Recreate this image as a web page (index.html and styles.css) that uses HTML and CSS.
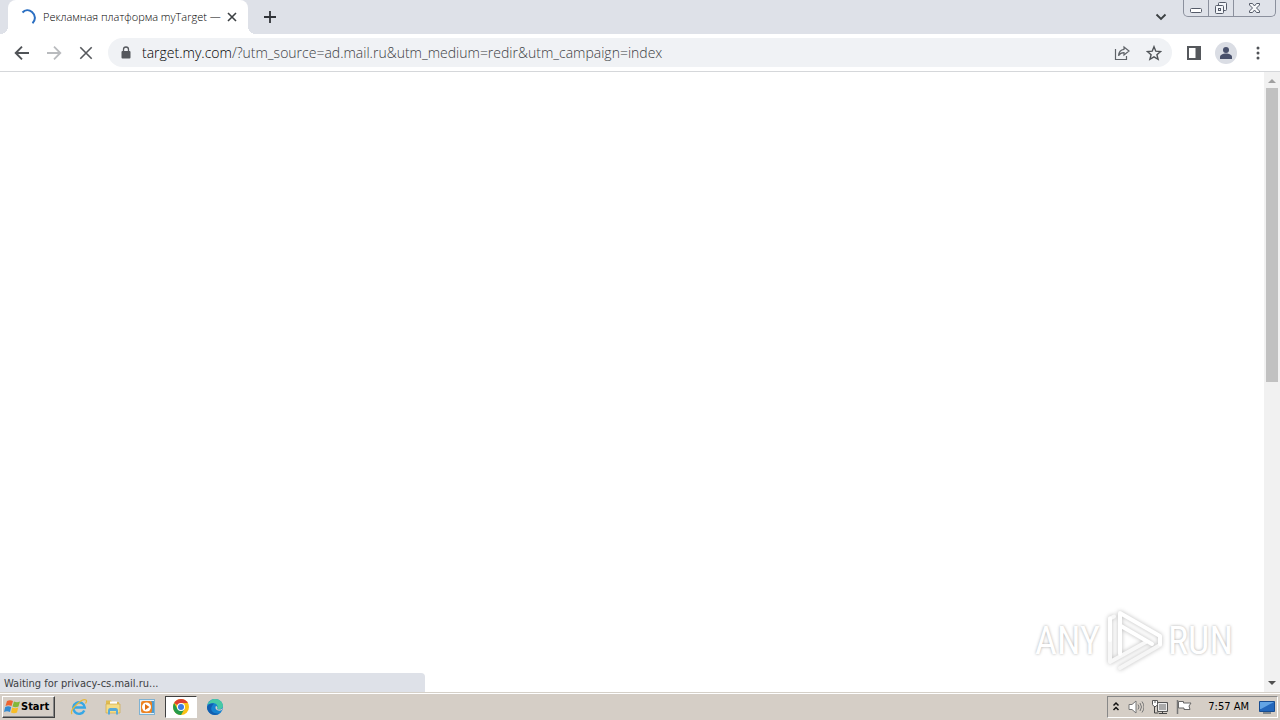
FILE: index.html
```html
<!DOCTYPE html>
<html lang="en">
<head>
<meta charset="utf-8">
<title>Рекламная платформа myTarget</title>
<link rel="stylesheet" href="styles.css">
</head>
<body>
<div class="screen">
  <header class="tabstrip">
    <div class="tab">
      <svg class="spinner" width="16" height="16" viewBox="0 0 16 16"><path d="M2.500 3.500C5 .8 9 .5 12 3c3.500 3 4 8 .5 11.200" fill="none" stroke="#2b6fc2" stroke-width="2"/></svg>
      <span class="tab-title">Рекламная платформа myTarget —</span>
      <button class="icon-btn tab-close" aria-label="Close tab"><svg width="10" height="10" viewBox="0 0 10 10"><path d="M1 1l8 8M9 1l-8 8" stroke="#3c4043" stroke-width="1.6"/></svg></button>
    </div>
    <button class="icon-btn new-tab" aria-label="New tab"><svg width="12" height="12" viewBox="0 0 12 12"><path d="M6 0v12M0 6h12" stroke="#303338" stroke-width="1.8"/></svg></button>
    <button class="icon-btn tab-search" aria-label="Search tabs"><svg width="12" height="8" viewBox="0 0 12 8"><path d="M1.5 1.5L6 6l4.500-4.500" fill="none" stroke="#3c4043" stroke-width="1.900"/></svg></button>
    <div class="window-controls">
      <button aria-label="Minimize"><svg width="13" height="16" viewBox="0 0 13 16"><rect x=".5" y="8.500" width="11" height="4" rx="1" fill="#fff" stroke="#555b69"/></svg></button>
      <button aria-label="Restore"><svg width="14" height="16" viewBox="0 0 14 16"><g fill="#f3f5f9" stroke="#555b69"><rect x="4.500" y="2.500" width="8" height="8" rx="1"/><rect x="1.500" y="5.500" width="8" height="8" rx="1"/><rect x="4.500" y="8.500" width="2" height="2"/></g></svg></button>
      <button class="wide" aria-label="Close"><svg width="13" height="16" viewBox="0 0 13 16"><path d="M1.500 3.500h3l2 2.500 2-2.500h3v1.500l-3 3 3 3v1.500h-3l-2-2.500-2 2.500h-3V11l3-3-3-3z" fill="#f8f9fb" stroke="#555b69"/></svg></button>
    </div>
  </header>

  <nav class="toolbar">
    <button class="icon-btn nav-btn" aria-label="Back"><svg width="16" height="16" viewBox="0 0 16 16"><path d="M15 8H2M8 1.700L1.700 8 8 14.300" fill="none" stroke="#505357" stroke-width="1.900"/></svg></button>
    <button class="icon-btn nav-btn" aria-label="Forward"><svg width="16" height="16" viewBox="0 0 16 16"><path d="M1 8h13M8 1.700L14.300 8 8 14.300" fill="none" stroke="#b9bbbe" stroke-width="1.800"/></svg></button>
    <button class="icon-btn nav-btn" aria-label="Stop loading"><svg width="16" height="16" viewBox="0 0 16 16"><path d="M2.300 2.300l11.400 11.400M13.700 2.300L2.300 13.700" stroke="#55585c" stroke-width="1.600"/></svg></button>
    <div class="omnibox">
      <svg width="12" height="14" viewBox="0 0 12 14"><rect x="1.500" y="5" width="9" height="7.500" rx="1" fill="#55585d"/><path d="M3.500 6V3.500a2.500 2.500 0 0 1 5 0V6" fill="none" stroke="#55585d" stroke-width="1.300"/></svg>
      <div class="url" role="textbox" aria-label="Address" tabindex="0"><span class="host">target.my.com</span>/?utm_source=ad.mail.ru&amp;utm_medium=redir&amp;utm_campaign=index</div>
      <button class="icon-btn" aria-label="Share"><svg width="16" height="16" viewBox="0 0 16 16"><path d="M1.500 4v10.500h11V11M10 2l5 4-5 4V7.700c-2.500 0-4.300 1-5.500 3 .3-3.600 2.200-6 5.500-6.400z" fill="none" stroke="#5f6368" stroke-width="1.200"/></svg></button>
      <button class="icon-btn" aria-label="Bookmark"><svg width="16" height="16" viewBox="0 0 16 16"><path d="M8 1.700l1.800 4.500 4.800.4-3.700 3.100 1.200 4.600L8 11.800l-4.100 2.500 1.200-4.600-3.700-3.100 4.800-.4z" fill="none" stroke="#505458" stroke-width="1.400"/></svg></button>
    </div>
    <button class="icon-btn nav-btn" aria-label="Side panel"><svg width="14" height="14" viewBox="0 0 14 14"><rect x="1" y="1" width="12" height="12" fill="#fff" stroke="#55585c" stroke-width="2"/><path d="M8.500 1H13v12H8.500z" fill="#55585c"/></svg></button>
    <button class="icon-btn nav-btn" aria-label="Profile"><svg width="22" height="22" viewBox="0 0 22 22"><circle cx="11" cy="11" r="11" fill="#dadde4"/><circle cx="11" cy="8" r="3" fill="#48506b"/><path d="M5 17v-2c0-2 3-3.500 6-3.500s6 1.500 6 3.500v2z" fill="#48506b"/></svg></button>
    <button class="icon-btn nav-btn" aria-label="Menu"><svg width="4" height="14" viewBox="0 0 4 14"><g fill="#505357"><circle cx="2" cy="2" r="1.500"/><circle cx="2" cy="7" r="1.500"/><circle cx="2" cy="12" r="1.500"/></g></svg></button>
  </nav>

  <main class="viewport">
    <div class="page"></div>
    <div class="scrollbar">
      <svg width="16" height="16" viewBox="0 0 16 16"><path d="M4 11l4-4 4 4z" fill="#a0a0a0"/></svg>
      <div class="track"><div class="thumb"></div></div>
      <svg width="16" height="16" viewBox="0 0 16 16"><path d="M4 5h8L8 9z" fill="#505050"/></svg>
    </div>
    <div class="status">Waiting for privacy-cs.mail.ru...</div>
    <div class="watermark">
      <span>ANY</span>
      <svg width="60" height="66" viewBox="0 0 60 66"><g fill="none" stroke-width="4" stroke-linejoin="round" stroke-linecap="round"><path d="M16 60l40-23" stroke="#f6f6f6"/><path d="M10 8.500l-4 2V54l36-20" stroke="#f8f8f8"/><path d="M6 10.500V32" stroke="#fff"/><path d="M16 46V5l40 23v8" stroke="#fff"/><path d="M17 18l31 18" stroke="#fff"/></g></svg>
      <span>RUN</span>
    </div>
  </main>

  <footer class="taskbar">
    <button class="start"><svg width="17" height="16" viewBox="0 0 17 16"><path d="M3 2c2-1 4-1 6 0L7.500 7c-2-1-4-1-6 0z" fill="#ee6430"/><path d="M10 2.500c2 1 4 1 6 0L14.500 7.500c-2 1-4 1-6 0z" fill="#82b83a"/><path d="M1.200 8c2-1 4-1 6 0L6 13c-2-1-4-1-6 0z" fill="#348bd1"/><path d="M8.200 8.500c2 1 4 1 6 0L13 13.500c-2 1-4 1-6 0z" fill="#f8bd26"/></svg>Start</button>
    <div class="launchers">
      <button class="task" aria-label="Internet Explorer"><svg width="18" height="18" viewBox="0 0 18 18"><path d="M14.300 12.500A5.800 5.800 0 1 1 14.800 9.500H4" fill="none" stroke="#36a7e5" stroke-width="2.400"/><path d="M2 16C-1 12 12 0 16 2c1 .7.500 2-.5 3.500" fill="none" stroke="#e5b83c" stroke-width="1.300"/></svg></button>
      <button class="task" aria-label="File Explorer"><svg width="18" height="18" viewBox="0 0 18 18"><path d="M2 4V2.500h5L8 4h7v10H2z" fill="#e0bc50"/><path d="M6 3.500h7v3H6z" fill="#fff"/><path d="M2 6h14v9H2z" fill="#f5dc85" stroke="#cfa94a" stroke-width=".7"/><path d="M4 16.500v-4q0-2.500 2-2.500h6q2 0 2 2.500v4h-2v-3.500H6v3.500z" fill="#58aad8"/></svg></button>
      <button class="task" aria-label="Media Player"><svg width="18" height="18" viewBox="0 0 18 18"><rect x="1.500" y="1.500" width="15" height="15" fill="#e3f1fa" stroke="#7eb2d3"/><path d="M13 3h3v12h-3z" fill="#4e9bce"/><rect x="3" y="3" width="11" height="12" rx="2" fill="#ed8322"/><circle cx="8.500" cy="9" r="4.500" fill="#fff"/><path d="M7 6l4.500 3L7 12z" fill="#e06f12"/></svg></button>
      <button class="task active" aria-label="Chrome"><svg width="16" height="16" viewBox="0 0 16 16"><circle cx="8" cy="8" r="8" fill="#fbc116"/><path d="M8 8L1.100 4A8 8 0 0 1 14.900 4H8z" fill="#df4032"/><path d="M1.100 4A8 8 0 0 0 8 16l3.500-6H4.500z" fill="#269b4b"/><circle cx="8" cy="8" r="4" fill="#fff"/><circle cx="8" cy="8" r="3" fill="#3e7ce4"/></svg></button>
      <button class="task" aria-label="Edge"><svg width="16" height="16" viewBox="0 0 16 16"><circle cx="8" cy="8" r="8" fill="#1682d0"/><path d="M.5 6C2 1 6 0 8 0c5 0 8 3.500 8 7 0 3-4 4-6 2.500C12 7 9 4 6 4 3.500 4 1.500 5 .5 6z" fill="#47c9a5"/><path d="M5 7c-3 5 3 9 8 7a8 8 0 0 1-5 2C3 16 0 12 0 8c1-3 4-4 7-3.500z" fill="#125eaf"/><path d="M9 7c-2 3 2 6 6 4l1-3c-1 3-4 3-6 2 1-1 0-3-1-3z" fill="#d6d0c9"/></svg></button>
    </div>
    <div class="tray">
      <button class="icon-btn" aria-label="Show hidden icons"><svg width="8" height="12" viewBox="0 0 8 12"><path d="M1.500 4.500L4 2l2.500 2.500M1.500 9L4 6.500 6.500 9" fill="none" stroke="#111" stroke-width="1.500"/></svg></button>
      <button class="icon-btn" aria-label="Volume"><svg width="16" height="16" viewBox="0 0 16 16"><path d="M1 5.500h3L8 2v12l-4-3.500H1z" fill="#fff" stroke="#777"/><path d="M10 5.500q2 2.500 0 5M12 4q3 4 0 8M14 2.500q4 5.500 0 11" fill="none" stroke="#777"/></svg></button>
      <button class="icon-btn" aria-label="Network"><svg width="16" height="16" viewBox="0 0 16 16"><path d="M5.500 3.500h10v9h-10z" fill="#aaa" stroke="#555"/><path d="M6.500 4.500h8v7h-8z" fill="none" stroke="#eee"/><path d="M7 14.500h8M10.500 12v3M2.500 6v8h4" fill="none" stroke="#444"/><path d="M.5 1.500h5v4l-1.500 2H2L.5 5.500z" fill="#fff" stroke="#555"/><path d="M3 1v3" stroke="#555"/></svg></button>
      <button class="icon-btn" aria-label="Action center"><svg width="16" height="16" viewBox="0 0 16 16"><path d="M2.500 2.500h5v1.500h7.500L13 7l1 3.500H8V9H2.500z" fill="#fff" stroke="#666"/><path d="M1.500 1v14" stroke="#777" stroke-width="1.500"/></svg></button>
      <time class="clock">7:57 AM</time>
      <button class="icon-btn" aria-label="Show desktop"><svg width="16" height="14" viewBox="0 0 16 14"><path d="M.5 1.500h15v10H.5z" fill="#2367bc" stroke="#174c91"/><path d="M1 2h14L2 9H1z" fill="#62a4e5"/><path d="M4 13h8" stroke="#345" stroke-width="1"/></svg></button>
    </div>
  </footer>
</div>
</body>
</html>
```
FILE: styles.css
```css
* { box-sizing: border-box; }
body { margin: 0; font: 11px/14px "DejaVu Sans Condensed", "Noto Sans", sans-serif; color: #202124; }
button { font: inherit; color: inherit; margin: 0; padding: 0; border: 0; background: none; }
svg { display: block; flex: none; }
.screen { display: flex; flex-direction: column; height: 100vh; min-height: 400px; background: #fff; }
.icon-btn { display: grid; place-items: center; flex: none; }

.tabstrip { display: flex; flex: none; align-items: flex-start; height: 34px; background: #dee1e8; padding: 0 4px 0 8px; }
.tab { position: relative; display: flex; align-items: center; gap: 7px; width: 240px; height: 34px; padding: 0 10px 0 12px; border-radius: 8px 8px 0 0; background: #fff; }
.tab::before, .tab::after { content: ""; position: absolute; bottom: 0; width: 8px; height: 8px; }
.tab::before { right: 100%; background: radial-gradient(circle at 0 0, transparent 8px, #fff 8px); }
.tab::after { left: 100%; background: radial-gradient(circle at 100% 0, transparent 8px, #fff 8px); }
.tab-title { flex: 1; min-width: 0; white-space: nowrap; font: 300 11px/14px "Open Sans", sans-serif; color: #000; }
.tab-close { width: 12px; height: 16px; }
.new-tab { width: 28px; height: 34px; margin-left: 8px; }
.tab-search { width: 28px; height: 34px; margin-left: auto; }
.window-controls { display: flex; height: 17px; margin-left: 8px; border: 1px solid #8b909d; border-top: 0; border-radius: 0 0 5px 5px; background: #dfe2e9; }
.window-controls button { display: grid; place-items: center; width: 25px; border-right: 1px solid #8b909d; }
.window-controls .wide { width: 41px; border-right: 0; }

.toolbar { display: flex; flex: none; align-items: center; height: 38px; padding: 0 6px; border-bottom: 1px solid #d5d7da; background: #fff; }
.nav-btn { width: 32px; height: 32px; }
.omnibox { display: flex; flex: 1; min-width: 0; align-items: center; gap: 16px; height: 29px; margin: 0 6px; padding: 0 10px 0 12px; border-radius: 15px; background: #f0f2f5; }
.url { flex: 1; margin-left: -6px; overflow: hidden; white-space: nowrap; font: 300 14px/20px "Open Sans", sans-serif; color: #3c4043; }
.host { color: #000; }

.viewport { position: relative; display: flex; flex: 1; min-height: 0; }
.page { flex: 1; background: #fff; }
.scrollbar { display: flex; flex-direction: column; width: 16px; background: #f1f1f1; }
.track { flex: 1; padding: 0 2px; }
.thumb { height: 50%; background: #c1c1c1; }
.status { position: absolute; left: 0; bottom: 0; width: 425px; max-width: 50%; height: 19px; padding: 4px 4px 0; border-radius: 0 4px 0 0; background: #dee1e8; color: #3c4043; }
.watermark { position: absolute; right: 47px; bottom: 18px; display: flex; align-items: center; gap: 4px; font: 38px/44px "Roboto Condensed", "Open Sans Condensed", "Liberation Sans Narrow", sans-serif; color: #fff; text-shadow: 0 0 3px #aaa; }
.watermark svg { filter: drop-shadow(0 0 2px #bbb); }

.taskbar { display: flex; flex: none; align-items: center; height: 28px; padding: 1px 2px 0; border-top: 1px solid #d5d0c8; background: #d5cec6; box-shadow: inset 0 1px #fff; }
.start { display: flex; align-items: center; gap: 0; height: 22px; width: 53px; padding: 0 2px 0 1px; border: 1px solid; border-color: #fff #404040 #404040 #fff; box-shadow: inset -1px -1px #888; font-weight: bold; color: #000; }
.launchers { display: flex; margin-left: 8px; gap: 2px; }
.task { display: grid; place-items: center; width: 32px; height: 22px; }
.task.active { border: 1px solid; border-color: #404040 #fff #fff #404040; background: #fff; }
.tray { display: flex; align-items: center; gap: 8px; height: 22px; margin-left: auto; padding: 0 2px 0 4px; border: 1px solid; border-color: #888 #fff #fff #888; }
.clock { margin: 0 2px 0 8px; color: #000; }
```
